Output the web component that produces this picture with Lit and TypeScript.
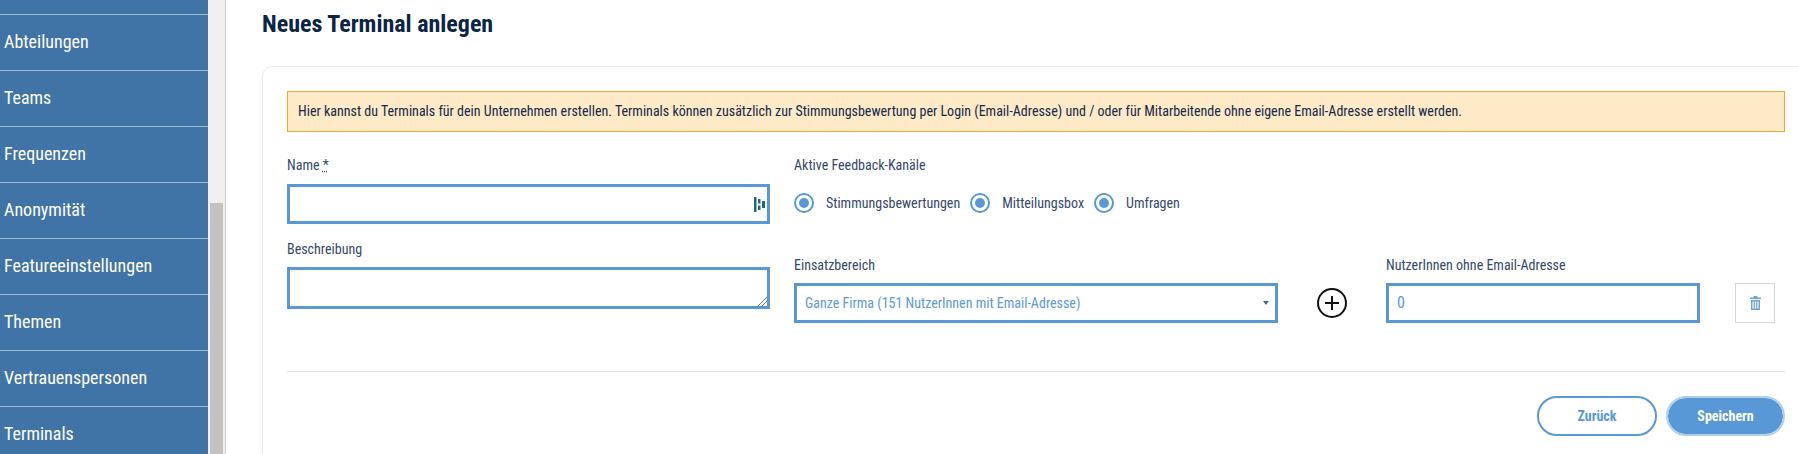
import { LitElement, html, css } from "lit";
import { customElement } from "lit/decorators.js";

const items = ["Abteilungen","Teams","Frequenzen","Anonymität","Featureeinstellungen","Themen","Vertrauenspersonen","Terminals"];
const channels = ["Stimmungsbewertungen","Mitteilungsbox","Umfragen"];

@customElement("app-root")
export class AppRoot extends LitElement {
  static styles = css`
    :host { display:block; width:1799px; height:454px; overflow:hidden; background:#fff; font-family:"Roboto","Liberation Sans",sans-serif; font-stretch:75%; color:#0b2545; }
    * { box-sizing:border-box; }
    .page { display:flex; height:454px; }
    .side { width:208px; flex:none; background:#4174a6; padding-top:14px; }
    .item { height:56px; border-top:1px solid #a3bbd3; color:#fff; font-size:18px; line-height:54px; padding-left:4px; }
    .track { width:17px; flex:none; background:#f0f0f0; padding:203px 2px 0; }
    .thumb { height:251px; background:#c2c2c2; }
    .main { flex:1; border-left:1px solid #d0d0d0; padding:0 0 0 36px; min-width:0; }
    h1 { margin:0; height:66px; font-size:24px; font-weight:700; line-height:48px; color:#0b2545; }
    .card { height:400px; width:1600px; border:1px solid #ececec; border-radius:10px; padding:24px 0 0 24px; }
    .alert { width:1498px; height:41px; border:1px solid #f0a830; background:#ffeac7; font-size:14px; line-height:38px; padding-left:10px; color:#14294a; }
    .form { display:grid; grid-template-columns:483px 508px 108px 314px 85px; width:1498px; }
    .lbl { font-size:14px; line-height:16px; color:#34496a; }
    .name-l { margin-top:25px; }
    abbr { text-decoration:underline dotted; }
    .inp { display:block; width:100%; height:40px; border:3px solid #5898d6; margin-top:11px; position:relative; background:#fff; }
    .ta { height:42px; margin-top:10px; }
    .desc-l { margin-top:17px; }
    .grip { position:absolute; right:0; bottom:0; }
    .lp { position:absolute; right:2px; top:10px; }
    .left { grid-column:1; grid-row:1; }
    .mid { grid-column:2; grid-row:1; padding-left:24px; display:flex; flex-direction:column; }
    .radios { display:flex; align-items:center; margin-top:16px; height:28px; }
    .radio { width:20px; height:20px; border-radius:50%; border:2px solid #5898d6; padding:3px; flex:none; }
    .radio i { display:block; width:100%; height:100%; border-radius:50%; background:#5898d6; }
    .rtext { font-size:14px; color:#34496a; margin:0 10px 0 12px; }
    .ein { margin-top:40px; }
    .sel { width:484px; font-size:14px; color:#5c9ad8; line-height:34px; padding-left:8px; margin-top:10px; }
    .caret { position:absolute; right:6px; top:15px; width:0; height:0; border:3.5px solid transparent; border-top:4px solid #3f6aa0; border-bottom:0; }
    .plus { grid-column:3; grid-row:1; padding:156px 0 0 39px; }
    .users { grid-column:4; grid-row:1; padding-top:125px; }
    .users .inp { color:#5c9ad8; font-size:16px; line-height:34px; padding-left:8px; margin-top:10px; }
    .trash { grid-column:5; grid-row:1; padding:151px 0 0 35px; }
    .tbtn { width:40px; height:40px; border:1px solid #d6d6d6; display:flex; align-items:center; justify-content:center; }
    .hr { height:1px; background:#e4e4e4; margin-top:48px; width:1498px; }
    .actions { display:flex; justify-content:flex-end; gap:9px; width:1498px; margin-top:24px; }
    .btn { width:120px; height:40px; border-radius:20px; border:2px solid #5898d6; color:#5898d6; background:#fff; font-size:14px; font-weight:700; text-align:center; line-height:36px; }
    .btn.pri { background:#5898d6; background-clip:padding-box; color:#fff; border-color:#b5cfe9; width:119px; }
  `;

  render() {
    return html`<div class="page">
      <nav class="side">${items.map(i => html`<div class="item">${i}</div>`)}</nav>
      <div class="track"><div class="thumb"></div></div>
      <main class="main">
        <h1>Neues Terminal anlegen</h1>
        <section class="card">
          <div class="alert">Hier kannst du Terminals für dein Unternehmen erstellen. Terminals können zusätzlich zur Stimmungsbewertung per Login (Email-Adresse) und / oder für Mitarbeitende ohne eigene Email-Adresse erstellt werden.</div>
          <div class="form">
            <div class="left">
              <div class="lbl name-l">Name <abbr>*</abbr></div>
              <div class="inp">
                <svg class="lp" width="11" height="15" viewBox="0 0 11 15" fill="#1f6a7c"><rect x="0" y="0" width="2.5" height="15"/><rect x="4" y="2" width="2.5" height="4.5"/><rect x="4" y="8.5" width="2.5" height="4.5"/><rect x="8" y="4" width="3" height="7"/></svg>
              </div>
              <div class="lbl desc-l">Beschreibung</div>
              <div class="inp ta">
                <svg class="grip" width="9" height="9" viewBox="0 0 9 9" stroke="#777" stroke-width="1"><path d="M9 0 0 9M9 4 4 9"/></svg>
              </div>
            </div>
            <div class="mid">
              <div class="lbl name-l">Aktive Feedback-Kanäle</div>
              <div class="radios">
                ${channels.map(c => html`<span class="radio"><i></i></span><span class="rtext">${c}</span>`)}
              </div>
              <div class="lbl ein">Einsatzbereich</div>
              <div class="inp sel">Ganze Firma (151 NutzerInnen mit Email-Adresse)<span class="caret"></span></div>
            </div>
            <div class="plus">
              <svg width="30" height="30" viewBox="0 0 30 30" fill="none" stroke="#111"><circle cx="15" cy="15" r="14" stroke-width="2"/><path d="M15 8v14M8 15h14" stroke-width="2"/></svg>
            </div>
            <div class="users">
              <div class="lbl">NutzerInnen ohne Email-Adresse</div>
              <div class="inp">0</div>
            </div>
            <div class="trash">
              <div class="tbtn">
                <svg width="11" height="14" viewBox="0 0 11 14" fill="#6ea5dc"><path d="M3.5 0h4v1.5h3.5V3H0V1.5h3.5zM1 4h9v10H1zm1.5 1.5v7h1.2v-7zm2.4 0v7h1.2v-7zm2.4 0v7h1.2v-7z" fill-rule="evenodd"/></svg>
              </div>
            </div>
          </div>
          <div class="hr"></div>
          <div class="actions">
            <div class="btn">Zurück</div>
            <div class="btn pri">Speichern</div>
          </div>
        </section>
      </main>
    </div>`;
  }
}
